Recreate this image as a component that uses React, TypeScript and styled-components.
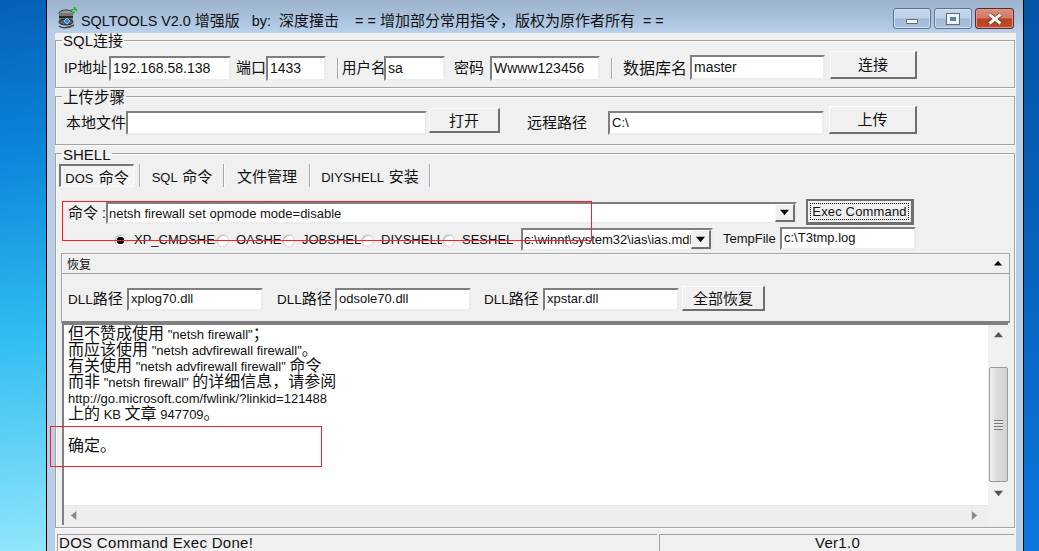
import React from "react";
import styled, { createGlobalStyle } from "styled-components";

const Global = createGlobalStyle`
  html, body { margin: 0; padding: 0; width: 1039px; height: 551px; overflow: hidden; }
  * { box-sizing: border-box; }
  body { font-family: "Liberation Sans", "Noto Sans CJK SC", sans-serif; color: #000; }
`;

const Screen = styled.div`
  position: relative; display: flex; width: 1039px; height: 551px; overflow: hidden;
`;
const DesktopLeft = styled.div`
  width: 46px;
  background: linear-gradient(172deg, #0560b6 0%, #0b86da 28%, #2fbcf1 60%, #92e6fb 100%);
`;
const DesktopRight = styled.div`
  flex: 1;
  background: linear-gradient(180deg, #0455a6 0%, #0868c6 60%, #0c78de 100%);
`;
const Window = styled.div`
  width: 978px; height: 551px; display: flex; flex-direction: column;
  border-left: 1px solid #000; border-right: 1px solid #000;
  background: #b8cfe8;
`;
const TitleBar = styled.div`
  height: 33px; flex: none; display: flex; align-items: flex-start; padding: 0 9px 0 9px;
  background: linear-gradient(180deg, #9db3cd 0%, #a9c1dc 55%, #b9d1eb 100%);
`;
const TitleText = styled.div`
  margin: 11px 0 0 1px; height: 18px; line-height: 18px; font-size: 14.4px; white-space: pre; color: #111;
`;
const Controls = styled.div`
  margin: 8px 0 0 auto; display: flex; gap: 3px;
`;
const Ctl = styled.div<{ $w: number; $close?: boolean }>`
  width: ${p => p.$w}px; height: 21px; border-radius: 3px; display: flex; align-items: center; justify-content: center;
  border: 1px solid ${p => (p.$close ? "#5d2a2a" : "#5f738c")};
  box-shadow: inset 0 0 0 1px ${p => (p.$close ? "#dd9a88" : "#cfdfef")};
  background: ${p => p.$close
    ? "linear-gradient(180deg,#dc8f7c 0%,#d27a66 48%,#b9401f 52%,#bd4c2d 100%)"
    : "linear-gradient(180deg,#c3d5e9 0%,#bed1e7 48%,#a0b8d4 52%,#abc2dc 100%)"};
`;
const MinGlyph = styled.div`
  width: 12px; height: 5px; margin-top: 6px; background: #f4f6f8; border: 1px solid #5b6b80; border-radius: 1px;
`;
const MaxGlyph = styled.div`
  width: 12px; height: 10px; background: #5e7fa6; border: 3px solid #f0f3f6; outline: 1px solid #5b6b80;
`;
const Client = styled.div`
  flex: 1; min-height: 0; margin: 0 7px 0 8px; padding-right: 1px; background: #f0f0f0; display: flex; flex-direction: column;
`;
const Group = styled.fieldset<{ $h: number; $mt?: number }>`
  margin: ${p => p.$mt ?? 0}px 0 0; padding: 0; min-width: 0; height: ${p => p.$h}px; flex: none;
  border: 1px solid #a3a3a3; box-shadow: inset 1px 1px 0 #fafafa, 1px 1px 0 #fafafa;
`;
const Caption = styled.legend<{ $lh: number }>`
  margin-left: 6px; padding: 0 1px; height: 15px; line-height: ${p => p.$lh}px; font-size: 15px; white-space: nowrap; color: #111;
`;
const Row = styled.div<{ $h: number; $mt?: number }>`
  display: flex; align-items: flex-start; height: ${p => p.$h}px; margin-top: ${p => p.$mt ?? 0}px;
`;
const Label = styled.div<{ $w: number; $ml?: number; $mt?: number; $h?: number; $size?: number }>`
  width: ${p => p.$w}px; height: ${p => p.$h ?? 24}px; line-height: ${p => p.$h ?? 24}px;
  margin-left: ${p => p.$ml ?? 0}px; margin-top: ${p => p.$mt ?? 0}px; flex: none;
  font-size: ${p => p.$size ?? 14}px; white-space: nowrap; color: #111;
`;
const Field = styled.div<{ $w: number; $h: number; $ml?: number; $mt?: number; $size?: number }>`
  width: ${p => p.$w}px; height: ${p => p.$h}px; flex: none; overflow: hidden; background: #fff;
  margin-left: ${p => p.$ml ?? 0}px; margin-top: ${p => p.$mt ?? 0}px;
  border: 2px solid; border-color: #7f7f7f #ececec #ececec #7f7f7f;
  padding-left: 2px; line-height: ${p => p.$h - 5}px; font-size: ${p => p.$size ?? 14}px; white-space: nowrap; color: #111;
`;
const Combo = styled.div<{ $w: number; $h: number; $ml?: number; $mt?: number }>`
  width: ${p => p.$w}px; height: ${p => p.$h}px; flex: none; display: flex; background: #fff;
  margin-left: ${p => p.$ml ?? 0}px; margin-top: ${p => p.$mt ?? 0}px;
  border: 2px solid; border-color: #7f7f7f #ececec #ececec #7f7f7f;
`;
const ComboText = styled.div<{ $h: number }>`
  flex: 1; min-width: 0; overflow: hidden; padding-left: 1px; line-height: ${p => p.$h - 4}px; font-size: 13px; white-space: nowrap; color: #111;
`;
const ComboButton = styled.div`
  width: 20px; flex: none; display: flex; align-items: center; justify-content: center; background: #f0f0f0;
  border: 1px solid; border-width: 1px 2px 2px 1px; border-color: #fafafa #707070 #707070 #fafafa;
`;
const Button = styled.div<{ $w: number; $h: number; $ml?: number; $mt?: number; $size?: number }>`
  width: ${p => p.$w}px; height: ${p => p.$h}px; flex: none; display: flex; align-items: center; justify-content: center;
  margin-left: ${p => p.$ml ?? 0}px; margin-top: ${p => p.$mt ?? 0}px; background: #f0f0f0;
  border-style: solid; border-width: 1px 2px 2px 1px; border-color: #fcfcfc #6e6e6e #6e6e6e #fcfcfc;
  padding-bottom: 2px; font-size: ${p => p.$size ?? 14}px; white-space: nowrap; color: #111;
`;
const DefaultButton = styled.div`
  width: 108px; height: 26px; margin-left: 9px; flex: none; padding: 2px; background: #f0f0f0;
  border-style: solid; border-width: 2px 3px 3px 2px; border-color: #6e6e6e;
`;
const FocusRing = styled.div`
  height: 100%; display: flex; align-items: center; justify-content: center;
  border: 1px dotted #000; font-size: 13px; letter-spacing: .15px; color: #111; white-space: nowrap;
`;
const Separator = styled.div<{ $ml: number; $mt?: number; $h: number }>`
  width: 2px; height: ${p => p.$h}px; flex: none; margin-left: ${p => p.$ml}px; margin-top: ${p => p.$mt ?? 0}px;
  background: #fafafa; border-left: 1px solid #a8a8a8;
`;
const Tabs = styled.div`
  display: flex; align-items: flex-start; height: 23px; margin: 3px 0 0 3px;
`;
const ActiveTab = styled.div`
  width: 75px; height: 23px; display: flex; align-items: center; justify-content: center; flex: none;
  border: 1px solid; border-width: 2px 1px 1px 2px; border-color: #777 #fafafa #fafafa #777;
  background: #f3f3f3; font-size: 13px; word-spacing: 1.5px; color: #111; white-space: nowrap;
`;
const Tab = styled.div<{ $w: number }>`
  width: ${p => p.$w}px; height: 23px; flex: none; display: flex; align-items: center; justify-content: center;
  font-size: 13px; word-spacing: 1.5px; color: #111; white-space: nowrap;
`;
const RadioItem = styled.div<{ $w: number; $ml?: number }>`
  width: ${p => p.$w}px; margin-left: ${p => p.$ml ?? 0}px; flex: none; height: 24px; display: flex; align-items: center; gap: 7px;
  overflow: hidden; margin-top: 1px;
`;
const RadioDot = styled.div<{ $on?: boolean }>`
  width: 13px; height: 13px; flex: none; border-radius: 50%; background: radial-gradient(circle, ${p => (p.$on ? "#000 0 3.5px, #fff 4px" : "#fff 0 4px")});
  border: 1px solid #d6d6d6; box-shadow: inset 1px 1px 0 #bbb;
`;
const RadioText = styled.div`
  font-size: 13px; white-space: nowrap; color: #111; line-height: 24px;
`;
const Restore = styled.div`
  width: 949px; height: 70px; margin-left: 5px; flex: none; background: #f0f0f0;
  border: 1px solid #a3a3a3; border-bottom: 2px solid #808080; box-shadow: inset 1px 1px 0 #fafafa;
`;
const RestoreHead = styled.div`
  height: 20px; display: flex; align-items: center; justify-content: space-between; padding: 0 7px 0 5px;
  border-bottom: 1px solid #a3a3a3; font-size: 14px; color: #111;
`;
const Output = styled.div`
  width: 946px; height: 202px; margin-left: 6px; flex: none; display: grid; grid-template-columns: 1fr 20px; grid-template-rows: 1fr 20px;
  border-left: 2px solid #808080; border-top: 2px solid #808080; background: #f0f0f0;
`;
const OutputText = styled.div`
  background: #fff; padding: 0 0 0 4px; font-size: 13px; color: #111; min-width: 0; min-height: 0;
`;
const OutLine = styled.div`
  height: 16px; line-height: 14px; white-space: nowrap;
  &::before { content: "\\200b"; font-family: "Noto Sans CJK SC", sans-serif; font-size: 16px; }
`;
const VScroll = styled.div`
  display: flex; flex-direction: column; align-items: center; padding: 6px 0 5px; background: #f0f0f0;
`;
const Thumb = styled.div`
  width: 19px; height: 115px; margin: 27px 0 7px; display: flex; align-items: center; justify-content: center;
  border: 1px solid #9a9a9a; border-radius: 2px;
  background: linear-gradient(90deg, #f1f1f1 0%, #dcdcdc 40%, #d2d2d2 100%);
`;
const Grip = styled.div`
  width: 9px; height: 10px; background: repeating-linear-gradient(180deg, #777 0 1px, #e6e6e6 1px 3px);
`;
const HScroll = styled.div`
  display: flex; align-items: center; justify-content: space-between; padding: 0 9px 0 6px; background: #eeeeee;
  border-top: 1px solid #e6e6e6;
`;
const Corner = styled.div`
  background: #f0f0f0;
`;
const StatusBar = styled.div`
  display: flex; height: 17px; margin: 6px 1px 0 2px; flex: none; gap: 2px;
`;
const StatusPane = styled.div<{ $w?: number; $center?: boolean }>`
  ${p => (p.$w ? `width:${p.$w}px;flex:none;` : "flex:1;")}
  border-top: 1px solid #a3a3a3; border-left: 1px solid #a3a3a3; padding-left: 1px;
  font-size: 15px; line-height: 16px; letter-spacing: .3px; color: #111; white-space: nowrap; overflow: hidden;
  text-align: ${p => (p.$center ? "center" : "left")};
`;
const Mark = styled.div<{ $x: number; $y: number; $w: number; $h: number }>`
  position: absolute; left: ${p => p.$x}px; top: ${p => p.$y}px; width: ${p => p.$w}px; height: ${p => p.$h}px;
  border: 1px solid #ff1c24; pointer-events: none; z-index: 5;
`;
const Han = styled.span<{ $size: number }>`
  font-family: "Noto Sans CJK SC", sans-serif; font-size: ${p => p.$size}px;
`;

const CJK = /([\u3000-\u303f\u3400-\u9fff\uff00-\uffef]+)/;
function Txt({ s, cjk = 15 }: { s: string; cjk?: number }) {
  return (
    <span>
      {s.split(CJK).map((part, i) =>
        i % 2 ? <Han key={i} $size={cjk}>{part}</Han> : <React.Fragment key={i}>{part}</React.Fragment>
      )}
    </span>
  );
}

const Arrow = ({ dir, color = "#000", size = 9 }: { dir: "up" | "down" | "left" | "right"; color?: string; size?: number }) => {
  const pts = { up: "0,7 5,1 10,7", down: "0,2 10,2 5,8", left: "7,0 7,10 1,5", right: "2,0 2,10 8,5" }[dir];
  return (
    <svg width={size} height={size} viewBox="0 0 10 10"><polygon points={pts} fill={color} /></svg>
  );
};

const AppIcon = () => (
  <svg width="24" height="24" viewBox="0 0 24 24" style={{ marginTop: 6, flex: "none" }}>
    <ellipse cx="10" cy="7" rx="7" ry="3" fill="#9a9a9a" stroke="#333" />
    <rect x="3" y="7" width="14" height="9" fill="#777" />
    <rect x="3" y="10" width="14" height="2" fill="#2c2c2c" />
    <ellipse cx="10" cy="16" rx="7" ry="3" fill="#5f5f5f" stroke="#222" />
    <path d="M15 4 L20 3 M18 1 L21 5 M16 7 L19 6" stroke="#18b82c" strokeWidth="1.6" />
    <path d="M11 12 l3 3 -3 3 -3 -3z" fill="#1d8fe8" stroke="#bfe6ff" strokeWidth=".7" />
    <path d="M3 20 Q9 24 18 19" stroke="#444" strokeWidth="1.5" fill="none" />
  </svg>
);

const CloseGlyph = () => (
  <svg width="16" height="12" viewBox="0 0 16 12">
    <path d="M2.5 1.5 L13.5 10.5 M13.5 1.5 L2.5 10.5" stroke="#5a2a22" strokeWidth="4.4" />
    <path d="M2.5 1.5 L13.5 10.5 M13.5 1.5 L2.5 10.5" stroke="#f6f3f1" strokeWidth="3" />
  </svg>
);

const radios: { label: string; w: number; on?: boolean; ml?: number }[] = [
  { label: "XP_CMDSHELL", w: 102, on: true, ml: 58 },
  { label: "OASHELL", w: 66 },
  { label: "JOBSHELL", w: 79 },
  { label: "DIYSHELL", w: 81 },
  { label: "SESHELL", w: 72 },
];

const outputLines = [
  '但不赞成使用 "netsh firewall"；',
  '而应该使用 "netsh advfirewall firewall"。',
  '有关使用 "netsh advfirewall firewall" 命令',
  '而非 "netsh firewall" 的详细信息，请参阅',
  "http://go.microsoft.com/fwlink/?linkid=121488",
  "上的 KB 文章 947709。",
  "",
  "确定。",
];

export default function App() {
  return (
    <Screen>
      <Global />
      <DesktopLeft />
      <Window>
        <TitleBar>
          <AppIcon />
          <TitleText>
            <Txt s={"SQLTOOLS V2.0 增强版   by:  深度撞击    = = 增加部分常用指令，版权为原作者所有  = ="} cjk={15} />
          </TitleText>
          <Controls>
            <Ctl $w={38}><MinGlyph /></Ctl>
            <Ctl $w={38}><MaxGlyph /></Ctl>
            <Ctl $w={39} $close><CloseGlyph /></Ctl>
          </Controls>
        </TitleBar>
        <Client>
          <Group $h={55}>
            <Caption $lh={14}><Txt s="SQL连接" /></Caption>
            <Row $h={38} $mt={1}>
              <Label $w={45} $ml={8} $mt={6}><Txt s="IP地址" /></Label>
              <Field $w={122} $h={25} $mt={7}>192.168.58.138</Field>
              <Label $w={30} $ml={5} $mt={6}><Txt s="端口" /></Label>
              <Field $w={60} $h={25} $mt={7}>1433</Field>
              <Separator $ml={11} $mt={9} $h={21} />
              <Label $w={42} $ml={3} $mt={6}><Txt s="用户名" cjk={14.5} /></Label>
              <Field $w={61} $h={25} $mt={7}>sa</Field>
              <Label $w={30} $ml={9} $mt={6}><Txt s="密码" /></Label>
              <Field $w={110} $h={25} $ml={6} $mt={7}>Wwww123456</Field>
              <Separator $ml={11} $mt={9} $h={21} />
              <Label $w={64} $ml={10} $mt={6}><Txt s="数据库名" cjk={16} /></Label>
              <Field $w={135} $h={25} $ml={3} $mt={6}>master</Field>
              <Button $w={87} $h={28} $ml={5} $mt={2}><Txt s="连接" /></Button>
            </Row>
          </Group>
          <Group $h={56} $mt={1}>
            <Caption $lh={15}><Txt s="上传步骤" cjk={15.5} /></Caption>
            <Row $h={39} $mt={0}>
              <Label $w={60} $ml={10} $mt={6}><Txt s="本地文件" /></Label>
              <Field $w={301} $h={24} $mt={7} />
              <Button $w={71} $h={25} $ml={2} $mt={4}><Txt s="打开" /></Button>
              <Label $w={61} $ml={27} $mt={6}><Txt s="远程路径" /></Label>
              <Field $w={216} $h={24} $ml={20} $mt={7} $size={13}>C:\</Field>
              <Button $w={88} $h={28} $ml={5} $mt={2}><Txt s="上传" /></Button>
            </Row>
          </Group>
          <Group $h={382} $mt={1}>
            <Caption $lh={18}>SHELL</Caption>
            <Tabs>
              <ActiveTab><Txt s="DOS 命令" /></ActiveTab>
              <Separator $ml={5} $h={23} />
              <Tab $w={82}><Txt s="SQL 命令" /></Tab>
              <Separator $ml={0} $h={23} />
              <Tab $w={84}><Txt s="文件管理" /></Tab>
              <Separator $ml={0} $h={23} />
              <Tab $w={118}><Txt s="DIYSHELL 安装" /></Tab>
              <Separator $ml={0} $h={23} />
            </Tabs>
            <Row $h={28} $mt={12}>
              <Label $w={38} $ml={12} $mt={1}><Txt s="命令 :" /></Label>
              <Combo $w={691} $h={22} $mt={3}>
                <ComboText $h={23}>netsh firewall set opmode mode=disable</ComboText>
                <ComboButton><Arrow dir="down" /></ComboButton>
              </Combo>
              <DefaultButton>
                <FocusRing>Exec Command</FocusRing>
              </DefaultButton>
            </Row>
            <Row $h={26}>
              {radios.map(r => (
                <RadioItem key={r.label} $w={r.w} $ml={r.ml}>
                  <RadioDot $on={r.on} />
                  <RadioText>{r.label}</RadioText>
                </RadioItem>
              ))}
              <Combo $w={192} $h={23} $ml={7} $mt={1}>
                <ComboText $h={23}>c:\winnt\system32\ias\ias.mdb</ComboText>
                <ComboButton><Arrow dir="down" /></ComboButton>
              </Combo>
              <Label $w={52} $ml={10} $size={13} $h={23}>TempFile</Label>
              <Field $w={136} $h={23} $ml={5} $size={13}>c:\T3tmp.log</Field>
            </Row>
            <Restore>
              <RestoreHead>
                <Txt s="恢复" cjk={12} />
                <Arrow dir="up" size={8} />
              </RestoreHead>
              <Row $h={48}>
                <Label $w={59} $ml={6} $mt={12} $h={24} $size={13.5}><Txt s="DLL路径" /></Label>
                <Field $w={136} $h={23} $mt={14} $size={13}>xplog70.dll</Field>
                <Label $w={54} $ml={14} $mt={12} $h={24} $size={13.5}><Txt s="DLL路径" /></Label>
                <Field $w={136} $h={23} $ml={4} $mt={14} $size={13}>odsole70.dll</Field>
                <Label $w={54} $ml={13} $mt={12} $h={24} $size={13.5}><Txt s="DLL路径" /></Label>
                <Field $w={136} $h={23} $ml={5} $mt={14} $size={13}>xpstar.dll</Field>
                <Button $w={83} $h={25} $ml={3} $mt={12}><Txt s="全部恢复" /></Button>
              </Row>
            </Restore>
            <Output>
              <OutputText>
                {outputLines.map((l, i) => (
                  <OutLine key={i}><Txt s={l} cjk={16} /></OutLine>
                ))}
              </OutputText>
              <VScroll>
                <Arrow dir="up" color="#555" />
                <Thumb><Grip /></Thumb>
                <Arrow dir="down" color="#555" />
              </VScroll>
              <HScroll>
                <Arrow dir="left" color="#8a8a8a" />
                <Arrow dir="right" color="#8a8a8a" />
              </HScroll>
              <Corner />
            </Output>
          </Group>
          <StatusBar>
            <StatusPane $w={600}>DOS Command Exec Done!</StatusPane>
            <StatusPane $center>Ver1.0</StatusPane>
          </StatusBar>
        </Client>
      </Window>
      <DesktopRight />
      <Mark $x={62} $y={201} $w={530} $h={40} />
      <Mark $x={50} $y={426} $w={272} $h={41} />
    </Screen>
  );
}
